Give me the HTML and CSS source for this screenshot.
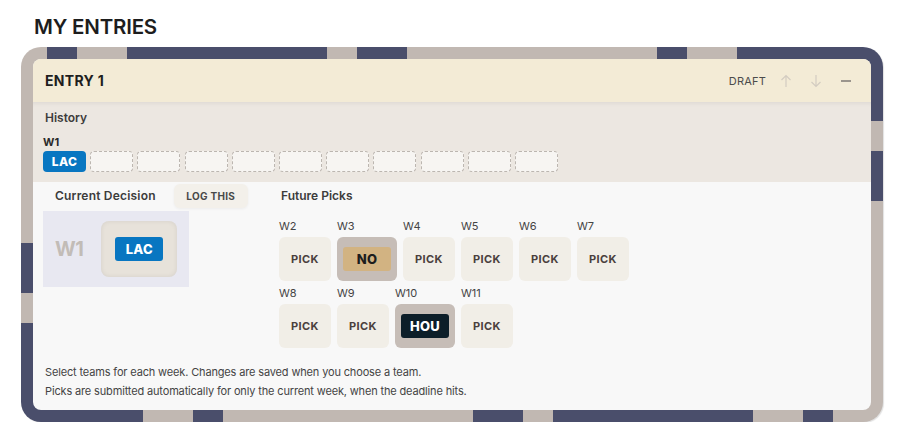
FILE: index.html
```html
<!DOCTYPE html>
<html lang="en">
<head>
  <meta charset="UTF-8" />
  <title>My Entries</title>
  <link rel="stylesheet" href="styles.css">
</head>
<body>
  <h1 class="page-title">MY ENTRIES</h1>

  <div class="entry-frame">
    <div class="entry-card">
      <div class="entry-head">
        <span class="entry-name">ENTRY 1</span>
        <div class="entry-tools">
          <span class="entry-status">DRAFT</span>
          <button class="tool-btn" disabled>
            <svg width="12" height="14" viewBox="0 0 12 14"><path d="M6 13V1.5M1.5 6L6 1.5L10.5 6" /></svg>
          </button>
          <button class="tool-btn" disabled>
            <svg width="12" height="14" viewBox="0 0 12 14"><path d="M6 1v11.5M1.5 8L6 12.5L10.5 8" /></svg>
          </button>
          <button class="tool-btn tool-collapse">
            <svg width="12" height="14" viewBox="0 0 12 14"><path d="M1 7h10" /></svg>
          </button>
        </div>
      </div>

      <div class="history">
        <div class="section-title">History</div>
        <div class="history-week">W1</div>
        <div class="history-row">
          <span class="chip team-lac">LAC</span>
          <span class="slot"></span>
          <span class="slot"></span>
          <span class="slot"></span>
          <span class="slot"></span>
          <span class="slot"></span>
          <span class="slot"></span>
          <span class="slot"></span>
          <span class="slot"></span>
          <span class="slot"></span>
          <span class="slot"></span>
        </div>
      </div>

      <div class="entry-main">
        <div class="entry-cols">
          <div class="decision-col">
            <div class="decision-head">
              <span class="section-title">Current Decision</span>
              <button class="log-btn">LOG THIS</button>
            </div>
            <div class="decision-box">
              <span class="decision-week">W1</span>
              <div class="decision-tile"><span class="pill team-lac">LAC</span></div>
            </div>
          </div>

          <div class="future-col">
            <div class="section-title future-title">Future Picks</div>
            <div class="future-grid">
              <div class="pick"><div class="pick-week">W2</div><button class="pick-tile">PICK</button></div>
              <div class="pick"><div class="pick-week">W3</div><button class="pick-tile picked"><span class="pill team-no">NO</span></button></div>
              <div class="pick"><div class="pick-week">W4</div><button class="pick-tile">PICK</button></div>
              <div class="pick"><div class="pick-week">W5</div><button class="pick-tile">PICK</button></div>
              <div class="pick"><div class="pick-week">W6</div><button class="pick-tile">PICK</button></div>
              <div class="pick"><div class="pick-week">W7</div><button class="pick-tile">PICK</button></div>
              <div class="pick"><div class="pick-week">W8</div><button class="pick-tile">PICK</button></div>
              <div class="pick"><div class="pick-week">W9</div><button class="pick-tile">PICK</button></div>
              <div class="pick"><div class="pick-week">W10</div><button class="pick-tile picked"><span class="pill team-hou">HOU</span></button></div>
              <div class="pick"><div class="pick-week">W11</div><button class="pick-tile">PICK</button></div>
            </div>
          </div>
        </div>

        <div class="entry-notes">
          <p>Select teams for each week. Changes are saved when you choose a team.</p>
          <p>Picks are submitted automatically for only the current week, when the deadline hits.</p>
        </div>
      </div>
    </div>
  </div>
</body>
</html>
```

FILE: styles.css
```css
:root { --navy: #4a4e6b; --taupe: #c1b8b2; --lac: #0876c1; }
body { margin: 0; padding: 13px 0 0 21px; font-family: Inter, "Liberation Sans", sans-serif; background: #fff; color: #333; }
button { font-family: inherit; border: none; cursor: pointer; padding: 0; }

.page-title { margin: 0 0 6px 13px; font-size: 20.5px; line-height: 28px; font-weight: 600; color: #1d1d1d; letter-spacing: -0.2px; }

/* striped frame: taupe base with navy segments on each side */
.entry-frame {
  width: 838px; padding: 12px; border-radius: 20px;
  background-color: var(--taupe);
  background-image:
    linear-gradient(var(--navy), var(--navy)), linear-gradient(var(--navy), var(--navy)),
    linear-gradient(var(--navy), var(--navy)), linear-gradient(var(--navy), var(--navy)),
    linear-gradient(var(--navy), var(--navy)),
    linear-gradient(var(--navy), var(--navy)), linear-gradient(var(--navy), var(--navy)),
    linear-gradient(var(--navy), var(--navy)), linear-gradient(var(--navy), var(--navy)),
    linear-gradient(var(--navy), var(--navy)), linear-gradient(var(--navy), var(--navy)),
    linear-gradient(var(--navy), var(--navy)),
    linear-gradient(var(--navy), var(--navy)), linear-gradient(var(--navy), var(--navy));
  background-repeat: no-repeat;
  background-size:
    30px 20px, 200px 20px, 50px 20px, 30px 20px, 146px 20px,
    20px 74px, 20px 50px,
    122px 20px, 30px 20px, 50px 20px, 200px 20px, 30px 20px,
    20px 50px, 20px 99px;
  background-position:
    26px 0, 106px 0, 336px 0, 636px 0, 716px 0,
    842px 0, 842px 104px,
    0 355px, 172px 355px, 452px 355px, 532px 355px, 782px 355px,
    0 196px, 0 276px;
  box-shadow: 1px 1px 1px rgba(0, 0, 0, 0.12);
}

.entry-card { border-radius: 8px; overflow: hidden; background: #f8f8f8; }

.entry-head { height: 43px; display: flex; align-items: center; justify-content: space-between; padding: 0 10px 0 12px; background: #f3ebd6; }
.entry-name { font-size: 14px; font-weight: 700; color: #1e1e1e; letter-spacing: 0.3px; }
.entry-tools { display: flex; align-items: center; }
.entry-status { font-size: 11px; color: #4b4b4b; letter-spacing: 0.2px; margin-right: 5px; }
.tool-btn { width: 30px; height: 24px; background: none; display: flex; align-items: center; justify-content: center; }
.tool-btn svg path { fill: none; stroke: #d3ccc1; stroke-width: 1.2; }
.tool-collapse svg path { stroke: #9b958d; stroke-width: 2; }

.section-title { font-size: 12px; font-weight: 600; color: #3c3c3c; line-height: 16px; }

.history { height: 80px; box-sizing: border-box; padding: 8px 10px 10px; background: #ece7e1; box-shadow: inset 0 5px 5px -4px rgba(0, 0, 0, 0.07); }
.history .section-title { margin-left: 2px; }
.history-week { margin-top: 9px; font-size: 11px; line-height: 14px; font-weight: 700; color: #2a2a2a; }
.history-row { display: flex; gap: 4.2px; margin-top: 2px; }
.chip { width: 43px; height: 21px; border-radius: 4px; display: flex; align-items: center; justify-content: center; color: #fff; font-size: 12px; font-weight: 800; letter-spacing: 0.3px; }
.slot { width: 43px; height: 21px; box-sizing: border-box; border: 1px dashed #bcb6b0; border-radius: 4px; background: #f7f5f2; }

.team-lac { background: var(--lac); }
.team-no { background: #d2b382; color: #1d1d1d; }
.team-hou { background: #0c1e29; }

.entry-main { padding: 2px 10px 9px; }
.entry-cols { display: flex; }

.decision-col { width: 236px; }
.decision-head { display: flex; align-items: center; height: 24px; padding-left: 12px; }
.decision-head .section-title { letter-spacing: 0.2px; }
.log-btn { margin-left: 18px; width: 74px; height: 24px; border-radius: 6px; background: #f3f0ea; box-shadow: 0 1px 3px rgba(0, 0, 0, 0.05); font-size: 10px; font-weight: 700; color: #494949; letter-spacing: 0.3px; }
.decision-box { margin-top: 3px; width: 146px; height: 76px; box-sizing: border-box; padding-left: 12px; display: flex; align-items: center; gap: 18px; background: #e8e8f1; }
.decision-week { font-size: 20px; font-weight: 700; color: #c2bcb7; letter-spacing: -0.5px; }
.decision-tile { width: 76px; height: 56px; border-radius: 8px; display: flex; align-items: center; justify-content: center; background: #e7e2da; box-shadow: inset 0 0 5px rgba(0, 0, 0, 0.08); }

.pill { width: 48px; height: 24px; border-radius: 3px; display: flex; align-items: center; justify-content: center; color: #fff; font-size: 13px; font-weight: 800; letter-spacing: 0.3px; }
.team-no { color: #1d1d1d; }

.future-col { flex: 1; }
.future-title { line-height: 24px; margin-left: 2px; }
.future-grid { margin-top: 11px; width: 380px; display: flex; flex-wrap: wrap; column-gap: 6px; row-gap: 5px; }
.pick { display: flex; flex-direction: column; }
.pick-week { font-size: 11px; line-height: 14px; color: #444; margin-bottom: 4px; }
.pick-tile { width: 52px; height: 44px; border-radius: 6px; background: #f1eee7; font-size: 11px; font-weight: 700; color: #4a403d; letter-spacing: 0.4px; display: flex; align-items: center; justify-content: center; }
.pick-tile.picked { width: 60px; background: #c6bdb7; }

.entry-notes { margin-top: 15px; padding-left: 2px; }
.entry-notes p { margin: 0; font-size: 11px; line-height: 19px; color: #444; letter-spacing: -0.15px; }
```
